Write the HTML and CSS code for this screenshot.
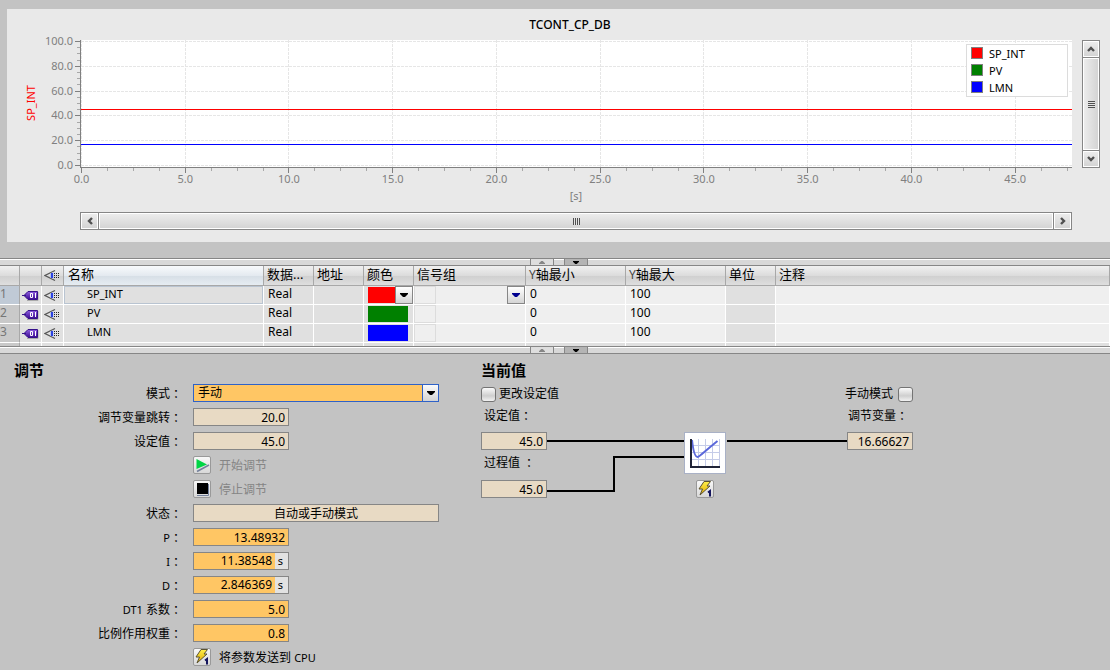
FILE: index.html
```html
<!DOCTYPE html>
<html lang="zh-CN">
<head>
<meta charset="utf-8">
<title>TCONT_CP_DB</title>
<link rel="stylesheet" href="styles.css">
</head>
<body>
<svg class="defs" aria-hidden="true">
  <defs>
    <linearGradient id="violet" x1="0" y1="0" x2="0" y2="1"><stop offset="0" stop-color="#8f5fe0"/><stop offset="1" stop-color="#3a0a92"/></linearGradient>
    <linearGradient id="gold" x1="0" y1="0" x2="0" y2="1"><stop offset="0" stop-color="#fff04a"/><stop offset="1" stop-color="#e0a800"/></linearGradient>
  </defs>
  <symbol id="tag" viewBox="0 0 17 13">
    <path d="M5 11.500h11V3" fill="none" stroke="#aaa"/>
    <path d="M2 6.500 6 2.500h9.500v8H6z" fill="url(#violet)" stroke="#35108a"/>
    <path d="M0 6.500h4" stroke="#35108a"/>
    <path d="M8.500 4.500h2v4h-2zM13.500 4v5" fill="none" stroke="#fff"/>
  </symbol>
  <symbol id="eye" viewBox="0 0 16 13">
    <path d="M11 1.500 1 6.500l10 5" fill="none" stroke="#555" stroke-width="1.300"/>
    <path d="M6 4.500 9.500 3v7L6 8.500z" fill="#b7c3ee"/>
    <path d="M7 4h2v5H7z" fill="#2b43e0"/>
    <path d="M10 4.500h6M10 6.500h6M10 8.500h6" stroke="#222" stroke-dasharray="1 1"/>
  </symbol>
  <symbol id="down" viewBox="0 0 8 4"><path d="M0 0h8v1L5 4H3L0 1z" fill="currentColor"/></symbol>
  <symbol id="chev" viewBox="0 0 8 8"><path d="M1 6 4 3l3 3" fill="none" stroke="#505050" stroke-width="2.400"/></symbol>
  <symbol id="bolt" viewBox="0 0 16 16">
    <path d="M7 0.500h6.500L10 5h3L3 14l2.500-6H2z" fill="url(#gold)" stroke="#5a5230"/>
    <path d="M11 11.500 13 10v5.500" fill="none" stroke="#14145c" stroke-width="2"/>
  </symbol>
</svg>

<section class="trend">
  <h1 class="trend-title">TCONT_CP_DB</h1>
  <div class="plot-wrap">
    <svg class="plot" id="plot" role="img" aria-label="SP_INT">
      <rect class="plot-bg" width="100%" height="127"/>
      <g id="grid"></g>
      <line class="sp" x1="1" x2="100%" y1="69.500" y2="69.500"/>
      <line class="lmn" x1="1" x2="100%" y1="104.500" y2="104.500"/>
      <path class="axis" d="M.5 0v128"/>
      <line class="axis" x1="0" x2="100%" y1="127.500" y2="127.500"/>
      <g id="ticks"></g>
      <text class="axis-text" x="50%" y="160" text-anchor="middle">[s]</text>
      <text class="axis-name" transform="translate(-45 63) rotate(-90)" text-anchor="middle">SP_INT</text>
    </svg>
    <ul class="legend">
      <li><i class="chip red"></i><span>SP_INT</span></li>
      <li><i class="chip green"></i><span>PV</span></li>
      <li><i class="chip blue"></i><span>LMN</span></li>
    </ul>
  </div>
  <div class="scroll vertical">
    <button class="sbtn" aria-label="向上"><svg width="10" height="8"><use href="#chev"/></svg></button>
    <div class="thumb"><i class="grip"></i></div>
    <button class="sbtn" aria-label="向下"><svg class="r180" width="10" height="8"><use href="#chev"/></svg></button>
  </div>
  <div class="scroll horizontal">
    <button class="sbtn" aria-label="向左"><svg class="r270" width="10" height="8"><use href="#chev"/></svg></button>
    <div class="thumb"><i class="grip"></i></div>
    <button class="sbtn" aria-label="向右"><svg class="r90" width="10" height="8"><use href="#chev"/></svg></button>
  </div>
</section>

<div class="splitter">
  <button class="split-btn up" aria-label="向上展开"><svg class="r180" width="6" height="3"><use href="#down"/></svg></button>
  <button class="split-btn" aria-label="向下展开"><svg width="6" height="3"><use href="#down"/></svg></button>
</div>
<div class="signals">
  <table>
    <colgroup><col class="w20"><col class="w22"><col class="w22"><col class="w200"><col class="w50"><col class="w50"><col class="w50"><col class="w112"><col class="w100"><col class="w100"><col class="w50"><col></colgroup>
    <thead>
      <tr><th></th><th></th><th class="ic"><svg width="16" height="13"><use href="#eye"/></svg></th><th class="active">名称</th><th>数据...</th><th>地址</th><th>颜色</th><th>信号组</th><th><small>Y</small>轴最小</th><th><small>Y</small>轴最大</th><th>单位</th><th>注释</th></tr>
    </thead>
    <tbody>
      <tr><td class="num on">1</td><td class="ic"><svg width="17" height="13"><use href="#tag"/></svg></td><td class="ic"><svg width="16" height="13"><use href="#eye"/></svg></td><td class="name sel">SP_INT</td><td>Real</td><td></td><td class="ctl"><div class="pick"><i class="swatch red"></i><button class="drop" aria-label="颜色"><svg width="8" height="4"><use href="#down"/></svg></button></div></td><td class="ctl lt"><div class="pick"><i class="box"></i><button class="drop navy" aria-label="信号组"><svg width="8" height="4"><use href="#down"/></svg></button></div></td><td class="lt">0</td><td class="lt">100</td><td></td><td class="lt"></td></tr>
      <tr><td class="num">2</td><td class="ic"><svg width="17" height="13"><use href="#tag"/></svg></td><td class="ic"><svg width="16" height="13"><use href="#eye"/></svg></td><td class="name">PV</td><td>Real</td><td></td><td class="ctl"><div class="pick"><i class="swatch green"></i></div></td><td class="ctl lt"><div class="pick"><i class="box"></i></div></td><td class="lt">0</td><td class="lt">100</td><td></td><td class="lt"></td></tr>
      <tr><td class="num">3</td><td class="ic"><svg width="17" height="13"><use href="#tag"/></svg></td><td class="ic"><svg width="16" height="13"><use href="#eye"/></svg></td><td class="name">LMN</td><td>Real</td><td></td><td class="ctl"><div class="pick"><i class="swatch blue"></i></div></td><td class="ctl lt"><div class="pick"><i class="box"></i></div></td><td class="lt">0</td><td class="lt">100</td><td></td><td class="lt"></td></tr>
      <tr class="stub"><td class="num"></td><td></td><td></td><td></td><td></td><td></td><td></td><td></td><td></td><td></td><td></td><td></td></tr>
    </tbody>
  </table>
</div>
<div class="splitter">
  <button class="split-btn up" aria-label="向上展开"><svg class="r180" width="6" height="3"><use href="#down"/></svg></button>
  <button class="split-btn" aria-label="向下展开"><svg width="6" height="3"><use href="#down"/></svg></button>
</div>

<main class="panels">
  <section class="tuning">
    <h2>调节</h2>
    <div class="form">
      <label for="mode">模式<b>：</b></label>
      <div class="combo"><select id="mode"><option>手动</option></select><span class="combo-arrow"><svg width="8" height="4"><use href="#down"/></svg></span></div>
      <label for="jump">调节变量跳转<b>：</b></label><input class="field" id="jump" value="20.0">
      <label for="sp">设定值<b>：</b></label><input class="field" id="sp" value="45.0">
      <div class="action dim"><button class="tool" id="start" aria-label="开始调节"><svg width="16" height="16"><path d="M2.500 2 13 7.500 2.500 12z" fill="#00d545"/><path d="M3 14.500 15 8" stroke="#74819c" stroke-width="1.500"/></svg></button><span>开始调节</span></div>
      <div class="action dim"><button class="tool" id="stop" aria-label="停止调节"><svg width="16" height="16"><path d="M3 14.500h11.500V3" fill="none" stroke="#74819c"/><path d="M3 2h11v11H3z" fill="#000"/></svg></button><span>停止调节</span></div>
      <label for="state">状态<b>：</b></label><input class="field wide" id="state" value="自动或手动模式" readonly>
      <label for="p"><small>P</small><b>：</b></label><input class="field hot" id="p" value="13.48932">
      <label for="i"><small>I</small><b>：</b></label><div class="unit-field"><input id="i" value="11.38548"><span>s</span></div>
      <label for="d"><small>D</small><b>：</b></label><div class="unit-field"><input id="d" value="2.846369"><span>s</span></div>
      <label for="dt"><small>DT1</small> 系数<b>：</b></label><input class="field hot" id="dt" value="5.0">
      <label for="w">比例作用权重<b>：</b></label><input class="field hot" id="w" value="0.8">
      <div class="action"><button class="tool" aria-label="将参数发送到 CPU"><svg width="16" height="16"><use href="#bolt"/></svg></button><span>将参数发送到 <small>CPU</small></span></div>
    </div>
  </section>

  <section class="current">
    <h2>当前值</h2>
    <div class="diagram">
      <div class="side">
        <label class="check"><input type="checkbox">更改设定值</label>
        <label class="cap" for="csp">设定值<b>：</b></label>
        <input class="field" id="csp" value="45.0">
        <label class="cap" for="cpv">过程值<b class="gap">：</b></label>
        <input class="field" id="cpv" value="45.0">
      </div>
      <svg class="wires" width="137" height="66"><path d="M0 9h137M0 59h67V25h70" fill="none" stroke="#000" stroke-width="2"/></svg>
      <div class="block">
        <svg width="42" height="42" role="img" aria-label="PID">
          <rect x=".5" y=".5" width="41" height="41" fill="#fff" stroke="#a9b1c6"/>
          <path d="M14.500 7v27M21.500 7v27M28.500 7v27M35.500 7v27M8 13.500h28M8 20.500h28M8 27.500h28" stroke="#c5cce8"/>
          <path d="M8 8C9 17 11 25 13.500 25c2 0 5-4 20-16" fill="none" stroke="#5b68da" stroke-width="2"/>
          <path d="M7 7v28h29" fill="none" stroke="#202438" stroke-width="2"/>
        </svg>
        <button class="tool" aria-label="发送"><svg width="16" height="16"><use href="#bolt"/></svg></button>
      </div>
      <svg class="wires" width="121" height="66"><path d="M1 9h120" stroke="#000" stroke-width="2"/></svg>
      <div class="side out">
        <label class="check">手动模式<input type="checkbox"></label>
        <label class="cap" for="lmn">调节变量<b>：</b></label>
        <input class="field" id="lmn" value="16.66627">
      </div>
    </div>
  </section>
</main>
<script src="chart.js"></script>
</body>
</html>
```

FILE: styles.css
```css
* { box-sizing: border-box; }
body {
  margin: 0;
  background: #c3c3c3;
  color: #000;
  font: 12px/18px "Noto Sans", "Noto Sans CJK SC", sans-serif;
  overflow: hidden;
}
button, input, select { font: inherit; color: inherit; margin: 0; padding: 0; border-radius: 0; }
button { display: flex; align-items: center; justify-content: center; }
h1, h2, ul { margin: 0; padding: 0; }
small { font-size: 11px; }
.defs { position: absolute; width: 0; height: 0; }
.red { background: #f00; }
.green { background: #008000; }
.blue { background: #00f; }
.r90 { transform: rotate(90deg); }
.r180 { transform: rotate(180deg); }
.r270 { transform: rotate(270deg); }

/* trend chart */
.trend {
  margin: 9px 0 16px 7px;
  height: 233px;
  padding: 0 10px 0 73px;
  background: #e9e9e9;
  display: grid;
  grid-template-columns: 1fr 18px;
  grid-template-rows: 31px 128px 18px;
  column-gap: 10px;
  align-content: start;
}
.trend-title {
  grid-column: 1 / 3;
  padding: 7px 40px 0 0;
  font-size: 12px;
  font-weight: 500;
  line-height: 18px;
  text-align: center;
}
.plot-wrap { position: relative; }
.plot { display: block; width: 100%; height: 128px; overflow: visible; }
.plot-bg { fill: #fff; }
.plot line, .plot path { shape-rendering: crispEdges; }
.grid-line { stroke: #e6e6e6; stroke-dasharray: 3 1; }
.sp { stroke: #f00; }
.lmn { stroke: #00f; }
.axis { stroke: #808080; }
.minor { stroke: #a8a8a8; }
.axis-text { fill: #808080; font-size: 11px; }
.axis-name { fill: #f00; font-size: 11px; }
.legend {
  position: absolute;
  top: 4px;
  right: 4px;
  width: 102px;
  padding: 0 4px;
  border: 1px solid #dcdcdc;
  background: #fff;
  list-style: none;
  font-size: 11px;
  line-height: 15px;
}
.legend li { display: flex; align-items: flex-start; gap: 6px; height: 17px; padding-top: 1px; }
.chip { width: 12px; height: 12px; margin-top: 1px; border: 1px solid #808080; }

.scroll { display: flex; border: 1px solid #868686; background: #868686; gap: 1px; }
.vertical { flex-direction: column; height: 128px; }
.horizontal { margin-top: 44px; height: 18px; }
.trend .horizontal { grid-column: 1; }
.sbtn, .thumb { border: 1px solid #fff; background: linear-gradient(#ececec, #d4d4d4); }
.sbtn { width: 17px; height: 16px; flex: none; }
.vertical .sbtn { width: 16px; height: 16px; }
.vertical .thumb { background: linear-gradient(90deg, #ececec, #d4d4d4); }
.thumb { flex: 1; display: flex; align-items: center; justify-content: center; }
.grip { width: 7px; height: 7px; background: repeating-linear-gradient(90deg, #505050 0 1px, #e4e4e4 1px 2px); }
.vertical .grip { background: repeating-linear-gradient(#505050 0 1px, #e4e4e4 1px 2px); }

/* splitters */
.splitter {
  display: flex;
  gap: 10px;
  height: 8px;
  padding-left: 530px;
  border: solid #868686;
  border-width: 1px 0;
  background: #d8d8d8;
  box-shadow: inset 0 1px #fff;
}
.split-btn { width: 24px; height: 6px; border: solid #868686; border-width: 0 1px; background: #b4b4b4; }
.split-btn.up { background: #dedede; color: #868686; }

/* signal table */
.signals { height: 80px; overflow: hidden; background: #fff; }
table { width: 100%; table-layout: fixed; border-collapse: separate; border-spacing: 0; }
.w20 { width: 20px; } .w22 { width: 22px; } .w50 { width: 50px; }
.w100 { width: 100px; } .w112 { width: 112px; } .w200 { width: 200px; }
th, td { padding: 0 4px; text-align: left; white-space: nowrap; overflow: hidden; }
th {
  height: 20px;
  padding-left: 3px;
  border-right: 1px solid #a8a8a8;
  border-bottom: 1px solid #a8a8a8;
  background: linear-gradient(#f0f0f0, #dcdcdc 50%, #cfcfcf 51%, #dedede);
  font-size: 13px;
  font-weight: 400;
  line-height: 16px;
  vertical-align: top;
}
th.active { padding-left: 4px; background: linear-gradient(#f8fafc, #e4eaf0 50%, #d6dee6 51%, #e6ecf2); }
th small { font-size: 12px; color: #444; }
td {
  height: 19px;
  border-right: 1px solid #fff;
  border-bottom: 1px solid #fff;
  background: #e0e0e0;
  line-height: 16px;
  vertical-align: top;
}
td.lt { background: #efefef; }
td.num { padding: 0; background: #c9c9c9; color: #777; border-right-color: #a8a8a8; }
td.num.on { background: #c0cad6; }
td.ic, th.ic { padding: 3px 2px 0; }
.ic svg { display: block; }
td.name { padding-left: 23px; font-size: 11px; }
td.sel { box-shadow: inset 0 0 0 1px #b9c4d1; }
td.ctl { padding: 0; }
.pick { display: flex; align-items: center; height: 18px; }
.swatch { width: 40px; height: 16px; margin-left: 4px; }
.swatch:not(:last-child) { width: 27px; }
.box { width: 22px; height: 18px; border: 1px solid #dcdcdc; }
.drop { width: 18px; height: 18px; margin-left: auto; border: 1px solid #868686; background: linear-gradient(#fff, #d4d4d4); }
.navy { color: #000090; }
.stub td { height: 3px; border-bottom: 0; padding: 0; }

/* lower panels */
.panels { display: grid; grid-template-columns: 467px 1fr; padding: 6px 0 0 14px; }
h2 { font-size: 15px; line-height: 20px; }
label b { font-family: "Noto Sans CJK TC", sans-serif; font-weight: 400; margin-left: 3px; }
.form {
  display: grid;
  grid-template-columns: 171px 246px;
  grid-auto-rows: 18px;
  column-gap: 8px;
  row-gap: 6px;
  margin-top: 4px;
}
.form > label { text-align: right; white-space: nowrap; }
.field, .unit-field {
  width: 96px;
  height: 18px;
  border: 1px solid #868686;
  background: #e8dac4;
  text-align: right;
  padding-right: 3px;
  line-height: 16px;
}
.field.wide { width: 100%; padding: 0; text-align: center; }
.field.hot { background: #ffc664; }
.unit-field { display: flex; padding: 0; }
.unit-field input { flex: 1; min-width: 0; border: 0; padding-right: 3px; background: #ffc664; text-align: right; }
.unit-field span { width: 13px; padding-right: 2px; background: #e2e2e2; text-align: center; font-size: 11px; }
.combo { display: flex; border: 1px solid #2f62c8; background: #ffc664; }
.combo select { flex: 1; appearance: none; border: 0; padding-left: 4px; background: transparent; line-height: 16px; }
.combo-arrow { width: 16px; display: flex; align-items: center; justify-content: center; border-left: 1px solid #2f62c8; background: linear-gradient(#fafafa, #d4d4d4); }
.action { grid-column: 2; display: flex; gap: 8px; line-height: 20px; }
.dim { color: #858585; }
.tool { width: 18px; height: 18px; flex: none; border: 1px solid #999; border-radius: 2px; background: linear-gradient(#f8f8f8, #d8d8d8); }

/* controller diagram */
.diagram { display: flex; margin-top: 5px; }
.side { display: flex; flex-direction: column; width: 66px; }
.side .field { width: 66px; }
.check { display: flex; align-items: center; gap: 3px; height: 18px; white-space: nowrap; }
.check input {
  appearance: none;
  width: 15px;
  height: 15px;
  flex: none;
  border: 1px solid #747474;
  border-radius: 3px;
  background: linear-gradient(#fafafa, #cfcfcf 60%, #f2f2f2);
}
.cap { height: 29px; padding: 3px 0 0 3px; white-space: nowrap; }
.cap b.gap { margin-left: 6px; }
.field + .cap { height: 30px; }
.wires { margin-top: 47px; flex: none; }
.block { display: flex; flex-direction: column; align-items: center; gap: 6px; margin-top: 47px; }
.out { align-items: flex-end; }
.out .check { gap: 5px; }
.out .cap { width: 66px; padding-left: 1px; }
```

FILE: chart.js
```js
const NS = "http://www.w3.org/2000/svg";
const grid = document.getElementById("grid");
const ticks = document.getElementById("ticks");

function add(parent, tag, attrs, text) {
  const el = document.createElementNS(NS, tag);
  for (const key in attrs) el.setAttribute(key, attrs[key]);
  if (text) el.textContent = text;
  parent.appendChild(el);
}

// value axis: 0 to 100, a tick every 5 and a label every 20
for (let v = 0; v <= 100; v += 5) {
  const y = Math.round(125 - v * 1.24) + 0.5;
  const major = v % 20 === 0;
  add(ticks, "line", { class: major ? "axis" : "minor", x1: major ? -5 : -3, x2: 0, y1: y, y2: y });
  if (major) {
    add(grid, "line", { class: "grid-line", x1: 1, x2: "100%", y1: y, y2: y });
    add(ticks, "text", { class: "axis-text", x: -7, y: y + 3, "text-anchor": "end" }, v.toFixed(1));
  }
}

// time axis: a tick every 1.25 s and a label every 5 s
const SPAN = 47.75;
for (let k = 0; k * 1.25 < SPAN; k++) {
  const t = k * 1.25;
  const x = (0.15 + t / SPAN * 99.88).toFixed(3) + "%";
  const major = k % 4 === 0;
  add(ticks, "line", { class: major ? "axis" : "minor", x1: x, x2: x, y1: 128, y2: major ? 133 : 131 });
  if (major) {
    add(grid, "line", { class: "grid-line", x1: x, x2: x, y1: 0, y2: 127 });
    add(ticks, "text", { class: "axis-text", x: x, y: 143, "text-anchor": "middle" }, t.toFixed(1));
  }
}
```
